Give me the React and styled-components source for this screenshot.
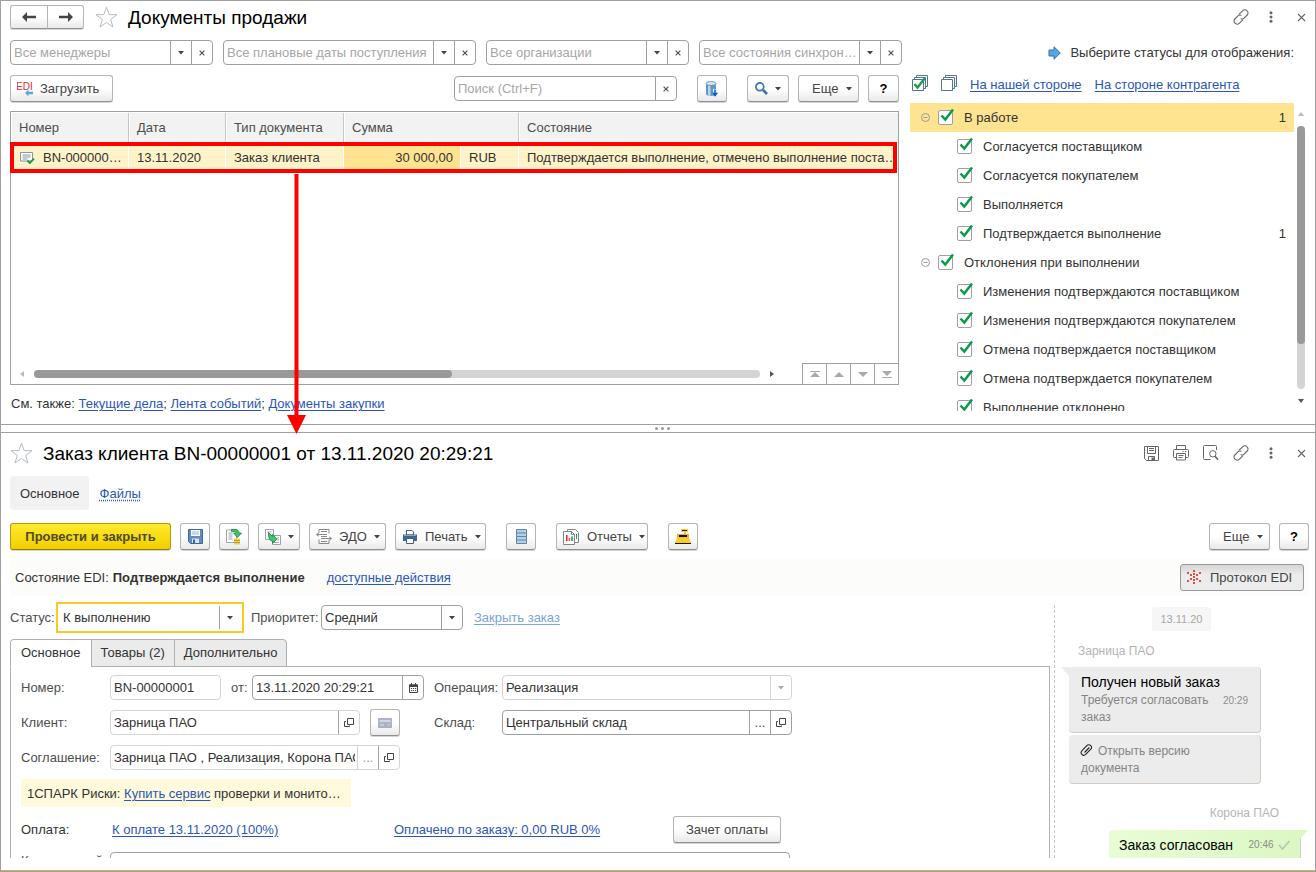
import { useState } from "react";
import styled, { createGlobalStyle, css } from "styled-components";

const GlobalStyle = createGlobalStyle`
  * {
    box-sizing: border-box;
  }

  body {
    margin: 0;
    background: #fff;
    color: #333;
    font-family: "Liberation Sans", Arial, sans-serif;
    font-size: 13px;
    line-height: 17px;
  }

  button, input, select, textarea {
    font: inherit;
    color: inherit;
    margin: 0;
  }

  svg {
    display: block;
    flex: none;
  }
`;

/* ---------- window ---------- */

const Window = styled.div`
  display: flex;
  flex-direction: column;
  height: 100vh;
  min-width: 1120px;
  overflow: hidden;
  border: 1px solid #a0a0a0;
`;

const ListPanel = styled.section`
  flex: none;
  padding: 0 8px 0 9px;
`;

const DocPanel = styled.section`
  display: flex;
  flex-direction: column;
  flex: 1;
  min-height: 0;
  padding: 0 6px 12px 9px;
  border-bottom: 1px solid #c9b458;
`;

const Splitter = styled.div`
  display: flex;
  flex: none;
  align-items: center;
  justify-content: center;
  gap: 3px;
  height: 9px;
  padding-left: 8px;
  border: solid #a0a0a0;
  border-width: 1px 0;
`;

const Dot = styled.i`
  width: 3px;
  height: 3px;
  border-radius: 50%;
  background: #999;
`;

const Header = styled.header`
  display: flex;
  flex: none;
  align-items: center;
  height: ${({ $height }) => $height}px;
`;

const Title = styled.h1`
  flex: 1;
  margin: 0 0 0 10px;
  padding-top: 2px;
  color: #000;
  font-size: 19px;
  font-weight: 400;
  line-height: 24px;
`;

const HeaderTools = styled.div`
  display: flex;
  gap: 2px;
  margin-right: ${({ $pull }) => -$pull}px;
`;

const ToolIcon = styled.button`
  display: flex;
  align-items: center;
  justify-content: center;
  width: 28px;
  height: 24px;
  padding: 0;
  border: 0;
  background: none;
`;

const PlainIcon = styled.button`
  display: flex;
  padding: 0;
  border: 0;
  background: none;
`;

const Link = styled.a`
  color: #2a56b8;
  text-decoration: underline;
  text-underline-offset: 2px;
  ${({ $muted }) => $muted && css`color: #7ba3de;`}
  ${({ $dotted }) => $dotted && css`
    text-decoration-style: dotted;
  `}
`;

/* ---------- buttons ---------- */

const Button = styled.button`
  display: flex;
  flex: none;
  align-items: center;
  justify-content: center;
  gap: 7px;
  width: ${({ $width }) => $width}px;
  height: 27px;
  padding: 0;
  border: 1px solid #b4b4b4;
  border-bottom-color: #8f8f8f;
  border-radius: 3px;
  background: linear-gradient(#fff 50%, #e9e9e9);
  box-shadow: 0 1px 0 #d5d5d5;
  color: #444;
  white-space: nowrap;

  ${({ $primary }) => $primary && css`
    border-color: #b59d00;
    border-bottom-color: #957f00;
    background: linear-gradient(#ffea2e, #f0cf00);
    color: #504a20;
    font-weight: 700;
  `}

  ${({ $pressed }) => $pressed && css`
    border-color: #999;
    background: linear-gradient(#d6d6d6, #ececec 40%);
    box-shadow: none;
  `}

  ${({ $strong }) => $strong && css`
    color: #000;
    font-weight: 700;
  `}

  &:disabled svg {
    opacity: 0.5;
  }
`;

/* icon on the left, text after it, menu caret at the right edge */
const LabelButton = styled(Button)`
  justify-content: flex-start;
  padding: 0 6px;

  svg:last-child:not(:first-child) {
    margin-left: auto;
  }
`;

const MenuButton = styled(Button)`
  justify-content: space-between;
  padding: 0 6px 0 13px;
`;

const NavGroup = styled.div`
  display: flex;
  margin-right: 11px;
`;

const NavButton = styled(Button)`
  height: 24px;

  &:first-child {
    border-radius: 3px 0 0 3px;
  }

  &:last-child {
    margin-left: -1px;
    border-radius: 0 3px 3px 0;
  }
`;

const Toolbar = styled.div`
  display: flex;
  flex: none;
  align-items: center;
  gap: 9px;
`;

const Group = styled.div`
  display: flex;
  gap: 9px;
  margin-left: 11px;
`;

const Spacer = styled.div`
  flex: 1;
`;

/* ---------- fields ---------- */

const FieldBox = styled.div`
  display: flex;
  flex: none;
  width: ${({ $width }) => $width}px;
  height: 25px;
  overflow: hidden;
  border: 1px solid ${({ $light }) => ($light ? "#d4d4d4" : "#a0a0a0")};
  border-radius: 4px;
  background: #fff;

  ${({ $active }) => $active && css`
    height: 31px;
    padding: 2px;
    border: 2px solid #fbc91f;
    border-radius: 0;
  `}
`;

const TextInput = styled.input`
  flex: 1;
  width: 0;
  min-width: 0;
  margin: 0 2px 0 3px;
  padding: 0;
  border: 0;
  outline: 0;
  background: none;

  &::placeholder {
    color: #a6a6a6;
    opacity: 1;
  }
`;

const SelectArea = styled.div`
  display: grid;
  flex: 1;
  grid-template-columns: 1fr 21px;
  min-width: 0;
`;

const NativeSelect = styled.select`
  grid-area: 1 / 1 / 2 / 3;
  min-width: 0;
  padding: 0 21px 0 3px;
  border: 0;
  outline: 0;
  appearance: none;
  background: none;
  color: ${({ $empty }) => ($empty ? "#a6a6a6" : "#333")};
`;

const cell = css`
  display: flex;
  align-items: center;
  justify-content: center;
  width: 21px;
  border-left: 1px solid ${({ $light }) => ($light ? "#d4d4d4" : "#a0a0a0")};
`;

const SelectArrow = styled.span`
  ${cell}
  grid-area: 1 / 2 / 2 / 3;
  pointer-events: none;
`;

const FieldButton = styled.button`
  ${cell}
  flex: none;
  padding: 0;
  border-top: 0;
  border-right: 0;
  border-bottom: 0;
  background: none;
  color: ${({ $light }) => ($light ? "#999" : "#444")};
`;

/* ---------- document list ---------- */

const FilterRow = styled.div`
  display: flex;
  align-items: center;
  gap: 10px;
  margin: 7px 0 10px;
`;

const Hint = styled.div`
  display: flex;
  align-items: center;
  gap: 9px;
  margin: 0 13px 0 auto;
  white-space: nowrap;
`;

const Columns = styled.div`
  display: flex;
  gap: 11px;
`;

const ListColumn = styled.div`
  display: flex;
  flex: 1;
  flex-direction: column;
  min-width: 0;
`;

const TableBox = styled.div`
  position: relative;
  display: flex;
  flex: 1;
  flex-direction: column;
  justify-content: space-between;
  margin-top: 9px;
  border: 1px solid #a0a0a0;
`;

const Table = styled.table`
  width: 100%;
  table-layout: fixed;
  border-collapse: separate;
  border-spacing: 0;
`;

const Col = styled.col`
  width: ${({ $width }) => ($width ? `${$width}px` : "auto")};
`;

const Th = styled.th`
  height: 31px;
  padding: 0 0 0 7px;
  border: solid #fff;
  border-width: 1px 0 1px 1px;
  background: #f2f2f2;
  box-shadow: ${({ $last }) => ($last ? "none" : "inset -1px 0 0 #c8c8c8")};
  color: #4d4d4d;
  font-weight: 400;
  text-align: left;
`;

const Td = styled.td`
  height: 29px;
  padding: 0 ${({ $current }) => ($current ? 7 : 0)}px 0 8px;
  border-right: 1px solid #fff;
  overflow: hidden;
  background: ${({ $current }) => ($current ? "#fee391" : "#fdf2c8")};
  text-align: ${({ $current }) => ($current ? "right" : "left")};
  white-space: nowrap;
`;

const DocNumber = styled.span`
  display: flex;
  align-items: center;
  gap: 8px;
  padding-left: 1px;
`;

const RowMark = styled.div`
  position: absolute;
  top: 30px;
  right: 1px;
  left: -1px;
  height: 31px;
  border: 4px solid #f00;
  pointer-events: none;
`;

const MarkArrow = styled.svg`
  position: absolute;
  z-index: 2;
  top: 62px;
  left: 276px;
  pointer-events: none;
`;

const TableFooter = styled.div`
  display: flex;
  align-items: center;
  height: 21px;
  padding-left: 9px;
`;

const HTrack = styled.div`
  flex: 1;
  height: 8px;
  margin: 0 10px;
  border-radius: 4px;
  background: #d4d4d4;
`;

const HThumb = styled.div`
  width: 418px;
  height: 8px;
  border-radius: 4px;
  background: #999;
`;

const Pager = styled.div`
  display: flex;
  align-self: stretch;
  margin-left: 28px;
  border-top: 1px solid #a0a0a0;
`;

const PagerButton = styled.button`
  display: flex;
  align-items: center;
  justify-content: center;
  width: 24px;
  padding: 0;
  border: 0;
  border-left: 1px solid #a0a0a0;
  background: #fff;
`;

const SeeAlso = styled.nav`
  display: flex;
  align-items: center;
  height: 39px;
  padding: 0 0 2px 1px;
  white-space: pre;
`;

/* ---------- statuses ---------- */

const StatusColumn = styled.aside`
  flex: none;
  width: 397px;
  padding: 0 2px 13px 0;
`;

const StatusTools = styled.div`
  display: flex;
  align-items: flex-start;
  gap: 13px;
  height: 28px;
  padding-left: 2px;

  a {
    margin-top: 1px;
  }
`;

const StatusBody = styled.div`
  display: flex;
  gap: 3px;
  height: 308px;
`;

const StatusList = styled.ul`
  flex: 1;
  margin: 0;
  padding: 0;
  overflow: hidden;
  list-style: none;
`;

const StatusRow = styled.li`
  display: flex;
  align-items: center;
  height: 29px;
  padding: 0 8px 0 ${({ $level }) => ($level ? 47 : 11)}px;
  background: ${({ $selected }) => ($selected ? "#fee391" : "none")};
`;

const Toggle = styled.button`
  display: flex;
  margin-right: 8px;
  padding: 0;
  border: 0;
  background: none;
`;

const CheckLabel = styled.label`
  position: relative;
  display: flex;
  flex: 1;
  align-items: center;
  gap: 11px;
`;

const CheckBox = styled.input`
  width: 15px;
  height: 15px;
  border: 1px solid #a0a0a0;
  border-radius: 2px;
  appearance: none;
  background: #fff;

  & + svg {
    position: absolute;
    top: -1px;
    left: 2px;
    visibility: hidden;
    pointer-events: none;
  }

  &:checked + svg {
    visibility: visible;
  }
`;

const VScroll = styled.div`
  display: flex;
  flex-direction: column;
  align-items: center;
  width: 8px;
  padding: 9px 0 8px;
`;

const VTrack = styled.div`
  flex: 1;
  width: 8px;
  margin: 10px 0;
  border-radius: 4px;
  background: #d4d4d4;
`;

const VThumb = styled.div`
  height: 218px;
  border-radius: 4px;
  background: #999;
`;

/* ---------- order form ---------- */

const SectionNav = styled.nav`
  display: flex;
  flex: none;
  align-items: center;
  gap: 11px;
  margin: 3px 0 13px;
`;

const SectionCurrent = styled.span`
  padding: 9px 9px 8px 10px;
  border-radius: 4px;
  background: #f2f2f2;
`;

const StateBar = styled.div`
  display: flex;
  flex: none;
  align-items: center;
  height: 37px;
  margin-top: 9px;
  padding: 0 5px;
  background: #fcfcfa;

  b {
    margin: 0 22px 0 4px;
  }
`;

const Workspace = styled.div`
  display: flex;
  flex: 1;
  min-height: 0;
  overflow: hidden;
`;

const FormColumn = styled.div`
  flex: 1;
  min-width: 0;
  padding: 6px 4px 0 0;
`;

const StatusLine = styled.div`
  display: flex;
  align-items: center;
  height: 31px;
`;

const Priority = styled.div`
  display: flex;
  align-items: center;
  margin: 0 11px 0 7px;
`;

const Label = styled.label`
  flex: none;
  width: ${({ $width }) => ($width ? `${$width}px` : "auto")};
  color: #4d4d4d;
  white-space: nowrap;
`;

const Tabs = styled.div`
  display: flex;
  margin-top: 6px;
`;

const Tab = styled.button`
  height: 28px;
  margin: 0 0 -1px -1px;
  padding: 0 9px 1px;
  border: 1px solid #b0b0b0;
  background: ${({ $active }) => ($active ? "#fff" : "#ebebeb")};
  border-bottom-color: ${({ $active }) => ($active ? "#fff" : "#b0b0b0")};

  &:first-child {
    margin-left: 0;
    padding: 0 10px 1px;
    border-radius: 4px 0 0 0;
  }

  &:last-child {
    border-radius: 0 4px 0 0;
  }
`;

const TabPage = styled.div`
  display: flex;
  flex-direction: column;
  gap: 9px;
  height: 400px;
  padding: 8px 10px;
  border: 1px solid #b0b0b0;
`;

const FormGrid = styled.div`
  display: grid;
  grid-template-columns: 89px 324px 68px 290px;
  align-items: center;
  row-gap: 10px;
`;

const Cell = styled.div`
  display: flex;
  align-items: center;
  gap: 10px;
  height: 25px;
`;

const Notice = styled.div`
  width: 330px;
  padding: 6px 6px 5px;
  background: #fffadb;
  white-space: nowrap;
`;

const PayRow = styled.div`
  display: flex;
  align-items: center;
`;

const CommentRow = styled.div`
  display: flex;
`;

const PayCell = styled.div`
  width: ${({ $width }) => $width}px;
`;

/* ---------- protocol ---------- */

const Chat = styled.aside`
  display: flex;
  flex: none;
  flex-direction: column;
  width: 255px;
  margin-top: 9px;
  padding: 2px 0 0 14px;
  border-left: 1px dashed #c8c8c8;
`;

const DateChip = styled.time`
  align-self: center;
  margin-right: 15px;
  padding: 4px 8px 3px;
  border-radius: 3px;
  background: #f6f6f6;
  color: #a8a8a8;
  font-size: 11px;
`;

const Sender = styled.div`
  margin: ${({ $mine }) => ($mine ? "19px 30px 8px 0" : "12px 0 7px 9px")};
  color: #b4b4b4;
  font-size: 12px;
  text-align: ${({ $mine }) => ($mine ? "right" : "left")};
`;

const Bubble = styled.div`
  position: relative;
  width: 192px;
  margin-bottom: 2px;
  padding: 6px 12px;
  border: solid #d3cbc3;
  border-width: 0 1px 1px 0;
  border-radius: 4px;
  background: #ececec;
  color: #858585;
  font-size: 12px;

  ${({ $mine }) => $mine && css`
    align-self: flex-end;
    margin-right: 8px;
    padding: 6px 10px;
    background: linear-gradient(90deg, #e8fdd6, #dbf7c2);
  `}
`;

const Tail = styled.svg`
  position: absolute;
  top: 0;
  ${({ $side }) => $side}: -8px;
`;

const BubbleTitle = styled.div`
  color: #000;
  font-size: 14px;
  line-height: 19px;
`;

const BubbleText = styled.div`
  display: flex;
  justify-content: space-between;
  align-items: flex-start;
`;

const Time = styled.time`
  color: #8c8c8c;
  font-size: 10px;
`;

const Attachment = styled.button`
  display: block;
  padding: 2px 0 0;
  border: 0;
  background: none;
  color: inherit;
  font-size: 12px;
  text-align: left;

  svg {
    display: inline-block;
    margin: 0 5px -1px -1px;
  }
`;

/* ---------- icons ---------- */

const Caret = ({ color = "#444" }) => (
  <svg width="6" height="4"><path d="M0 0h6L3 3.5z" fill={color} /></svg>
);

const Cross = () => (
  <svg width="6" height="6" viewBox="0 0 6 6">
    <path d="M.6.6l4.8 4.8M5.4.6L.6 5.4" stroke="#555" strokeWidth="1.2" />
  </svg>
);

const CloseIcon = () => (
  <svg width="9" height="9" viewBox="0 0 9 9">
    <path d="M1 1l7 7M8 1L1 8" stroke="#666" strokeWidth="1.1" />
  </svg>
);

const Star = () => (
  <svg width="23" height="22" viewBox="0 0 23 22" fill="none" stroke="#b5bcc4">
    <path d="M11.5 1.2l2.6 7.4 7.9.1-6.3 4.8 2.3 7.5-6.5-4.5L5 21l2.3-7.5L1 8.7l7.9-.1z" />
  </svg>
);

const Arrow = ({ back }) => (
  <svg width="14" height="10" viewBox="0 0 14 10">
    <path d={back ? "M0 5l5-5v3.8h9v2.4H5V10z" : "M14 5L9 0v3.8H0v2.4h9V10z"} fill="#444" />
  </svg>
);

const LinkIcon = () => (
  <svg width="16" height="16" viewBox="0 0 16 16" fill="none" stroke="#666" strokeWidth="1.1" strokeLinecap="round">
    <path d="M6.2 5.2l3.6-3.6a2.900 2.900 0 014.200.2 2.900 2.900 0 01.2 4.200L11 9.200a2.800 2.800 0 01-3 .5" />
    <path d="M9.8 10.8l-3.600 3.600a2.900 2.900 0 01-4.200-.2 2.900 2.900 0 01-.2-4.200L5 6.800a2.800 2.800 0 013-.5" />
  </svg>
);

const MoreIcon = () => (
  <svg width="4" height="12" fill="#666">
    <circle cx="2" cy="1.7" r="1.5" />
    <circle cx="2" cy="6" r="1.5" />
    <circle cx="2" cy="10.3" r="1.5" />
  </svg>
);

const SaveIcon = () => (
  <svg width="15" height="15" viewBox="0 0 15 15" fill="none" stroke="#666">
    <path d="M.5.5h14v14h-12l-2-2zM3.500.5v7h8v-7M5 2.500h5M5 4.500h5M4.500 14.500v-4h6v4" />
    <path d="M7.500 11.500h2.500v3H7.500z" fill="#666" stroke="none" />
  </svg>
);

const PrintIcon = () => (
  <svg width="16" height="16" viewBox="0 0 16 16" fill="none" stroke="#666">
    <path d="M3.500 4V.5h9V4M3.500 12.500h-2a1 1 0 01-1-1v-6a1 1 0 011-1h13a1 1 0 011 1v6a1 1 0 01-1 1h-2M3.500 8.500h9v6.500h-9zM5.500 10.500h5M5.500 12.500h4M12 6.500h1.500M9.500 6.500h1" />
  </svg>
);

const PreviewIcon = () => (
  <svg width="16" height="16" viewBox="0 0 16 16" fill="none" stroke="#666">
    <path d="M13.500 5V1.500a1 1 0 00-1-1h-11a1 1 0 00-1 1v12a1 1 0 001 1h6" />
    <circle cx="9.800" cy="8.800" r="3.200" />
    <path d="M12 11.200l3 3.600" strokeWidth="1.600" />
  </svg>
);

const EdiIcon = () => (
  <svg width="16" height="16" viewBox="0 0 16 16">
    <text x="-1" y="9" fill="#e8281e" fontSize="10" fontFamily="Liberation Sans, sans-serif">EDI</text>
    <path d="M8 12l3.500-3.500v2.200H16v2.600h-4.500v2.200z" fill="#5aa5ea" />
  </svg>
);

const DatabaseIcon = () => (
  <svg width="14" height="16" viewBox="0 0 14 16">
    <path d="M1 2.500v10.500c0 1.300 2.200 2 5 2s5-.7 5-2V2.500z" fill="#5f98c4" />
    <path d="M3 3.500v10.900c.8.300 1.500.4 2.500.5V4z" fill="#b5d6ea" />
    <ellipse cx="6" cy="2.500" rx="5" ry="1.900" fill="#dcecf6" stroke="#4a7fa8" strokeWidth=".8" />
    <path d="M8 8h4v4h1l-3 3.700L7 12h1z" fill="#eef6fb" />
    <path d="M10 8.500V14M7.800 11.800l2.200 2.600 2.200-2.600" stroke="#0b5fb0" strokeWidth="1.600" fill="none" />
  </svg>
);

const SearchIcon = () => (
  <svg width="13" height="13" viewBox="0 0 13 13" fill="none" stroke="#3b74ae">
    <circle cx="4.800" cy="4.800" r="3.900" strokeWidth="1.700" />
    <path d="M8 8l4 4" strokeWidth="2.600" />
  </svg>
);

const DocIcon = () => (
  <svg width="15" height="12" viewBox="0 0 15 12">
    <path d="M.5.5h12v8.500H.5z" fill="#fff" stroke="#8a93a0" />
    <path d="M2.500 3h8M2.500 5h8M2.500 7h5" stroke="#8a93a0" />
    <path d="M7.500 8.500l2.300 2.400L14 6.600" stroke="#1d9c46" strokeWidth="2" fill="none" />
  </svg>
);

const BlueArrow = () => (
  <svg width="13" height="14" viewBox="0 0 13 14">
    <path d="M1 4h5V.8L12.300 7 6 13.200V10H1z" fill="#5ba4e6" stroke="#2f6fab" />
  </svg>
);

const StackIcon = ({ checked }) => (
  <svg width="16" height="16" viewBox="0 0 16 16" fill="#fff" stroke="#4f7690">
    <path d="M4.500.5h11v11h-11z" />
    <path d="M2.500 2.500h11v11h-11z" />
    <path d="M.5 4.500h11v11H.5z" />
    {checked && <path d="M2.500 9l3 3.500 7.500-9.500" stroke="#1f9d48" strokeWidth="2.400" fill="none" />}
  </svg>
);

const MinusIcon = () => (
  <svg width="9" height="9" viewBox="0 0 9 9" fill="none" stroke="#999">
    <circle cx="4.500" cy="4.500" r="4" />
    <path d="M2.500 4.500h4" />
  </svg>
);

const CheckIcon = () => (
  <svg width="14" height="15" viewBox="0 0 14 15">
    <path d="M1.500 7.500l3.800 4L13 1.500" stroke="#0b9a4a" strokeWidth="2.500" fill="none" />
  </svg>
);

const Triangle = ({ dir, color = "#555" }) => {
  const paths = {
    left: "M4 0v6L0 3z",
    right: "M0 0v6l4-3z",
    up: "M0 4h6L3 0z",
    down: "M0 0h6L3 4z",
  };
  const flat = dir === "up" || dir === "down";
  return (
    <svg width={flat ? 6 : 4} height={flat ? 4 : 6}><path d={paths[dir]} fill={color} /></svg>
  );
};

const PagerIcon = ({ d }) => (
  <svg width="10" height="7" viewBox="0 0 10 7"><path d={d} fill="#aaa" /></svg>
);

const FloppyIcon = () => (
  <svg width="15" height="15" viewBox="0 0 15 15">
    <path d="M.5.5h14v14h-12l-2-2z" fill="#5d8fc4" stroke="#3d6796" />
    <path d="M3 1h9v6H3z" fill="#fff" />
    <path d="M4 3h7M4 5h7" stroke="#9bb0c4" />
    <path d="M4 9.500h7V14H4z" fill="#dbe4ec" />
    <path d="M5 10.500h2V14H5z" fill="#3d6796" />
  </svg>
);

const PostIcon = () => (
  <svg width="16" height="16" viewBox="0 0 16 16">
    <path d="M.5 1h10v12.500H.5z" fill="#fff" stroke="#9aa5ae" />
    <path d="M2.500 4h4M2.500 6h4M2.500 8h4M2.500 10h4" stroke="#9aa5ae" />
    <path d="M5.500.5H9c2.500 0 4 1 4 3.500h2.500L11.500 8.500 7.500 4H10c0-1.200-.4-1.500-1.200-1.500H5.500z" fill="#3cc96d" stroke="#17853e" strokeWidth=".8" />
    <path d="M8 9.500h6v6H8z" fill="#f5cf4e" />
    <path d="M8 11.500h6M8 13.500h6" stroke="#c8952a" />
  </svg>
);

const BasedOnIcon = () => (
  <svg width="16" height="16" viewBox="0 0 16 16">
    <path d="M.5.5h8v10h-8z" fill="#fff" stroke="#9aa5ae" />
    <path d="M7.500 6.500h8v9h-8z" fill="#fff" stroke="#9aa5ae" />
    <path d="M2.500 3h4M12 9h2M12 11h2M9 13.500h5" stroke="#9aa5ae" />
    <path d="M3.500 3.500l4 4V5.500l4.500 4.500-4.500 4.500v-2.500c-2.500 0-4-2-4-8.500z" fill="#3cc96d" stroke="#17853e" strokeWidth=".8" />
  </svg>
);

const EdoIcon = () => (
  <svg width="16" height="15" viewBox="0 0 16 15" fill="none" stroke="#888">
    <path d="M3 4V.5h10v4M3 10.500v4h10V11M5 2.500h6M1 5.500h10M5 7.500h6M5 9.500h10M5 12.500h6" />
    <path d="M0 5.500l2.500-2.200v4.400zM16 9.500l-2.500-2.200v4.400z" fill="#888" stroke="none" />
  </svg>
);

const PrinterIcon = () => (
  <svg width="16" height="14" viewBox="0 0 16 14">
    <path d="M4.500.5h5.500l1.500 1.500v3h-7z" fill="#fff" stroke="#46617c" />
    <path d="M1 4.500h14v6.500H1z" fill="#3f6791" />
    <path d="M2 5.500h12" stroke="#86a7c8" />
    <path d="M4.500 8.500h7v5h-7z" fill="#fff" stroke="#46617c" />
  </svg>
);

const RegisterIcon = () => (
  <svg width="11" height="15" viewBox="0 0 11 15">
    <path d="M.5.5h10v14H.5z" fill="#b4d0e4" stroke="#5d87a6" />
    <path d="M1 4h9M1 7.500h9M1 11h9" stroke="#5d87a6" strokeWidth="1.200" />
  </svg>
);

const ReportIcon = () => (
  <svg width="17" height="16" viewBox="0 0 17 16">
    <path d="M4.500.5h8l3 3v10h-11z" fill="#fff" stroke="#7d8790" />
    <path d="M.5 2.500h8l3 3v10H.5z" fill="#fff" stroke="#7d8790" />
    <path d="M8.500 2.500v3h3" fill="none" stroke="#7d8790" />
    <path d="M3 6h1.600v6H3z" fill="#d9342b" />
    <path d="M5.600 9h1.600v3H5.600z" fill="#e0574f" />
    <path d="M8.200 7.500h1.600V12H8.200z" fill="#279b49" />
    <path d="M13.500 5v5" stroke="#279b49" />
  </svg>
);

const CashIcon = () => (
  <svg width="16" height="15" viewBox="0 0 16 15">
    <path d="M6 0h7v3h-2v2H9V3H6z" fill="#fbc91f" />
    <path d="M7 1h5v1H7z" fill="#222" />
    <path d="M2 5h12v4H2z" fill="#e9a856" />
    <path d="M2 8.500h12l2 5.500H0z" fill="#fccd1c" />
    <path d="M4 6h8v2H4zM0 14h16v1H0z" fill="#111" />
  </svg>
);

const ProtocolIcon = () => (
  <svg width="16" height="15" viewBox="0 0 16 15" fill="#d9504a">
    <path d="M6 0h2v2H6zM6 3h2v2H6zM6 6h2v2H6zM6 9h2v2H6zM6 12h2v2H6zM0 2h2v2H0zM3 4h2v2H3zM3 8h2v2H3zM0 10h2v2H0zM12 2h2v2h-2zM9 4h2v2H9zM9 8h2v2H9zM12 10h2v2h-2z" />
  </svg>
);

const CalendarIcon = () => (
  <svg width="9" height="10" viewBox="0 0 9 10">
    <path d="M.5 2h8v7.500h-8z" fill="none" stroke="#444" />
    <path d="M0 1.500h9v2.500H0zM2 0h1v2H2zM6 0h1v2H6z" fill="#444" />
    <path d="M2 5.500h5.200M2 7.500h5.200" stroke="#444" strokeDasharray="1.200 .8" />
  </svg>
);

const OpenIcon = () => (
  <svg width="10" height="10" viewBox="0 0 10 10" fill="none" stroke="#444">
    <path d="M3.500.5h6v6h-6zM2 3.500H.5v5h5V7.500" />
  </svg>
);

const CardIcon = () => (
  <svg width="14" height="10" viewBox="0 0 14 10">
    <path d="M0 0h14v10H0z" fill="#5d6c95" />
    <path d="M1.500 3h11" stroke="#b9c8d4" strokeWidth="1.500" />
    <path d="M2 7h4" stroke="#c5cfdd" />
    <path d="M9 6h3v2H9z" fill="#d06a6a" />
  </svg>
);

const ClipIcon = () => (
  <svg width="13" height="12" viewBox="0 0 13 12" fill="none" stroke="#222" strokeWidth="1.100">
    <path d="M4.500 8.500l4.800-5M1.800 6.800l5-5.200a2.800 2.800 0 014 0 2.500 2.500 0 010 3.600L5.500 10.500a2.200 2.200 0 01-3.700-.3 2.300 2.300 0 010-3.400z" />
  </svg>
);

/* ---------- parts ---------- */

const Select = ({ id, label, value, width, light, active, empty, onClear }) => (
  <FieldBox $width={width} $light={light} $active={active}>
    <SelectArea>
      <NativeSelect id={id} aria-label={label} $empty={empty} defaultValue={value}>
        <option>{value}</option>
      </NativeSelect>
      <SelectArrow $light={light}><Caret color={light ? "#aaa" : "#444"} /></SelectArrow>
    </SelectArea>
    {onClear && (
      <FieldButton type="button" aria-label="Очистить" onClick={onClear}><Cross /></FieldButton>
    )}
  </FieldBox>
);

const filters = [
  { name: "Все менеджеры", width: 203 },
  { name: "Все плановые даты поступления", width: 253 },
  { name: "Все организации", width: 203 },
  { name: "Все состояния синхрон…", width: 203 },
];

const statuses = [
  { name: "В работе", level: 0, count: 1, selected: true },
  { name: "Согласуется поставщиком", level: 1 },
  { name: "Согласуется покупателем", level: 1 },
  { name: "Выполняется", level: 1 },
  { name: "Подтверждается выполнение", level: 1, count: 1 },
  { name: "Отклонения при выполнении", level: 0 },
  { name: "Изменения подтверждаются поставщиком", level: 1 },
  { name: "Изменения подтверждаются покупателем", level: 1 },
  { name: "Отмена подтверждается поставщиком", level: 1 },
  { name: "Отмена подтверждается покупателем", level: 1 },
  { name: "Выполнение отклонено", level: 1 },
];

const pagerIcons = [
  { name: "В начало", d: "M0 0h10v1H0zM5 1l5 5H0z" },
  { name: "Вверх", d: "M5 1l5 5H0z" },
  { name: "Вниз", d: "M0 1h10L5 6z" },
  { name: "В конец", d: "M0 0h10L5 5zM0 6h10v1H0z" },
];

const formTabs = ["Основное", "Товары (2)", "Дополнительно"];

const DocumentsTable = () => (
  <TableBox>
    <Table>
      <colgroup>
        <Col $width={118} />
        <Col $width={97} />
        <Col $width={118} />
        <Col $width={117} />
        <Col $width={58} />
        <Col />
      </colgroup>
      <thead>
        <tr>
          <Th>Номер</Th>
          <Th>Дата</Th>
          <Th>Тип документа</Th>
          <Th colSpan={2}>Сумма</Th>
          <Th $last>Состояние</Th>
        </tr>
      </thead>
      <tbody>
        <tr>
          <Td><DocNumber><DocIcon />BN-000000…</DocNumber></Td>
          <Td>13.11.2020</Td>
          <Td>Заказ клиента</Td>
          <Td $current>30 000,00</Td>
          <Td>RUB</Td>
          <Td>Подтверждается выполнение, отмечено выполнение поста…</Td>
        </tr>
      </tbody>
    </Table>
    <TableFooter>
      <Triangle dir="left" color="#bbb" />
      <HTrack><HThumb /></HTrack>
      <Triangle dir="right" />
      <Pager>
        {pagerIcons.map((icon) => (
          <PagerButton key={icon.name} aria-label={icon.name}><PagerIcon d={icon.d} /></PagerButton>
        ))}
      </Pager>
    </TableFooter>
    <RowMark />
    <MarkArrow width="20" height="260" viewBox="0 0 20 260">
      <path d="M7.500 0h4v242h-4zM0 241h19l-9.500 19z" fill="#f00" />
    </MarkArrow>
  </TableBox>
);

const Statuses = () => {
  const [off, setOff] = useState([]);

  const toggle = (name) => {
    setOff(off.includes(name) ? off.filter((n) => n !== name) : [...off, name]);
  };

  return (
    <StatusColumn>
      <StatusTools>
        <PlainIcon aria-label="Выбрать все" onClick={() => setOff([])}><StackIcon checked /></PlainIcon>
        <PlainIcon aria-label="Снять все" onClick={() => setOff(statuses.map((s) => s.name))}><StackIcon /></PlainIcon>
        <Link href="#our">На нашей стороне</Link>
        <Link href="#partner">На стороне контрагента</Link>
      </StatusTools>
      <StatusBody>
        <StatusList>
          {statuses.map((s) => (
            <StatusRow key={s.name} $level={s.level} $selected={s.selected}>
              {s.level === 0 && <Toggle aria-label="Свернуть"><MinusIcon /></Toggle>}
              <CheckLabel>
                <CheckBox type="checkbox" checked={!off.includes(s.name)} onChange={() => toggle(s.name)} />
                <CheckIcon />
                {s.name}
              </CheckLabel>
              {s.count}
            </StatusRow>
          ))}
        </StatusList>
        <VScroll>
          <Triangle dir="up" color="#bbb" />
          <VTrack><VThumb /></VTrack>
          <Triangle dir="down" />
        </VScroll>
      </StatusBody>
    </StatusColumn>
  );
};

const OrderForm = () => {
  const [tab, setTab] = useState(formTabs[0]);

  return (
    <FormColumn>
      <StatusLine>
        <Label htmlFor="status" $width={46}>Статус:</Label>
        <Select id="status" value="К выполнению" width={188} active />
        <Priority>
          <Label htmlFor="priority" $width={70}>Приоритет:</Label>
          <Select id="priority" value="Средний" width={142} />
        </Priority>
        <Link href="#close" $muted>Закрыть заказ</Link>
      </StatusLine>
      <Tabs role="tablist">
        {formTabs.map((name) => (
          <Tab key={name} role="tab" $active={name === tab} onClick={() => setTab(name)}>{name}</Tab>
        ))}
      </Tabs>
      <TabPage>
        <FormGrid>
          <Label htmlFor="number">Номер:</Label>
          <Cell>
            <FieldBox $width={111} $light><TextInput id="number" defaultValue="BN-00000001" /></FieldBox>
            <Label htmlFor="date" $width={11}>от:</Label>
            <FieldBox $width={172}>
              <TextInput id="date" defaultValue="13.11.2020 20:29:21" />
              <FieldButton aria-label="Календарь"><CalendarIcon /></FieldButton>
            </FieldBox>
          </Cell>
          <Label htmlFor="operation">Операция:</Label>
          <Select id="operation" value="Реализация" width={290} light />

          <Label htmlFor="client">Клиент:</Label>
          <Cell>
            <FieldBox $width={250} $light>
              <TextInput id="client" defaultValue="Зарница ПАО" />
              <FieldButton aria-label="Открыть"><OpenIcon /></FieldButton>
            </FieldBox>
            <Button $width={30} disabled aria-label="Карта"><CardIcon /></Button>
          </Cell>
          <Label htmlFor="store">Склад:</Label>
          <FieldBox $width={290}>
            <TextInput id="store" defaultValue="Центральный склад" />
            <FieldButton aria-label="Выбрать">...</FieldButton>
            <FieldButton aria-label="Открыть"><OpenIcon /></FieldButton>
          </FieldBox>

          <Label htmlFor="contract">Соглашение:</Label>
          <FieldBox $width={290} $light>
            <TextInput id="contract" defaultValue="Зарница ПАО , Реализация, Корона ПАО" />
            <FieldButton $light aria-label="Выбрать">...</FieldButton>
            <FieldButton aria-label="Открыть"><OpenIcon /></FieldButton>
          </FieldBox>
        </FormGrid>
        <Notice>
          1СПАРК Риски: <Link href="#spark">Купить сервис</Link> проверки и монито…
        </Notice>
        <PayRow>
          <PayCell $width={91}>Оплата:</PayCell>
          <PayCell $width={282}><Link href="#pay">К оплате 13.11.2020 (100%)</Link></PayCell>
          <PayCell $width={279}><Link href="#paid">Оплачено по заказу: 0,00 RUB 0%</Link></PayCell>
          <Button $width={108}>Зачет оплаты</Button>
        </PayRow>
        <CommentRow>
          <Label htmlFor="comment" $width={89}>Комментарий:</Label>
          <FieldBox $width={680}><TextInput id="comment" /></FieldBox>
        </CommentRow>
      </TabPage>
    </FormColumn>
  );
};

const Protocol = () => (
  <Chat>
    <DateChip>13.11.20</DateChip>
    <Sender>Зарница ПАО</Sender>
    <Bubble>
      <Tail $side="left" width="9" height="10"><path d="M0 0h9v10z" fill="#ececec" /></Tail>
      <BubbleTitle>Получен новый заказ</BubbleTitle>
      <BubbleText>
        <span>Требуется согласовать<br />заказ</span>
        <Time>20:29</Time>
      </BubbleText>
    </Bubble>
    <Bubble>
      <Attachment><ClipIcon />Открыть версию<br />документа</Attachment>
    </Bubble>
    <Sender $mine>Корона ПАО</Sender>
    <Bubble $mine>
      <Tail $side="right" width="9" height="10"><path d="M0 0h9L0 10z" fill="#dbf7c2" /></Tail>
      <BubbleText>
        <BubbleTitle>Заказ согласован</BubbleTitle>
        <Group>
          <Time>20:46</Time>
        </Group>
        <svg width="12" height="17" viewBox="0 0 12 17" fill="none" stroke="#b9c4b0" strokeWidth="1.500">
          <path d="M1 9l3.500 4L11.500 5" />
        </svg>
      </BubbleText>
    </Bubble>
  </Chat>
);

const App = () => {
  const [search, setSearch] = useState("");

  return (
    <>
      <GlobalStyle />
      <Window>
        <ListPanel>
          <Header $height={32}>
            <NavGroup>
              <NavButton $width={38} aria-label="Назад"><Arrow back /></NavButton>
              <NavButton $width={37} aria-label="Вперед"><Arrow /></NavButton>
            </NavGroup>
            <PlainIcon aria-label="В избранное"><Star /></PlainIcon>
            <Title>Документы продажи</Title>
            <HeaderTools $pull={8}>
              <ToolIcon aria-label="Ссылка"><LinkIcon /></ToolIcon>
              <ToolIcon aria-label="Меню"><MoreIcon /></ToolIcon>
              <ToolIcon aria-label="Закрыть"><CloseIcon /></ToolIcon>
            </HeaderTools>
          </Header>
          <FilterRow>
            {filters.map((f) => (
              <Select key={f.name} label={f.name} value={f.name} width={f.width} empty onClear={() => {}} />
            ))}
            <Hint><BlueArrow />Выберите статусы для отображения:</Hint>
          </FilterRow>
          <Columns>
            <ListColumn>
              <Toolbar>
                <LabelButton $width={103}><EdiIcon />Загрузить</LabelButton>
                <Spacer />
                <FieldBox $width={223}>
                  <TextInput
                    aria-label="Поиск"
                    placeholder="Поиск (Ctrl+F)"
                    value={search}
                    onChange={(e) => setSearch(e.target.value)}
                  />
                  <FieldButton aria-label="Очистить" onClick={() => setSearch("")}><Cross /></FieldButton>
                </FieldBox>
                <Group><Button $width={30} aria-label="Получить данные"><DatabaseIcon /></Button></Group>
                <Group>
                  <Button $width={42} aria-label="Найти"><SearchIcon /><Caret /></Button>
                  <MenuButton $width={61}>Еще<Caret /></MenuButton>
                  <Button $width={31} $strong>?</Button>
                </Group>
              </Toolbar>
              <DocumentsTable />
              <SeeAlso>
                См. также: <Link href="#todo">Текущие дела</Link>; <Link href="#feed">Лента событий</Link>; <Link href="#purchases">Документы закупки</Link>
              </SeeAlso>
            </ListColumn>
            <Statuses />
          </Columns>
        </ListPanel>

        <Splitter><Dot /><Dot /><Dot /></Splitter>

        <DocPanel>
          <Header $height={40}>
            <PlainIcon aria-label="В избранное"><Star /></PlainIcon>
            <Title>Заказ клиента BN-00000001 от 13.11.2020 20:29:21</Title>
            <HeaderTools $pull={6}>
              <ToolIcon aria-label="Сохранить"><SaveIcon /></ToolIcon>
              <ToolIcon aria-label="Печать"><PrintIcon /></ToolIcon>
              <ToolIcon aria-label="Просмотр"><PreviewIcon /></ToolIcon>
              <ToolIcon aria-label="Ссылка"><LinkIcon /></ToolIcon>
              <ToolIcon aria-label="Меню"><MoreIcon /></ToolIcon>
              <ToolIcon aria-label="Закрыть"><CloseIcon /></ToolIcon>
            </HeaderTools>
          </Header>
          <SectionNav>
            <SectionCurrent>Основное</SectionCurrent>
            <Link href="#files" $dotted>Файлы</Link>
          </SectionNav>
          <Toolbar>
            <Button $width={161} $primary>Провести и закрыть</Button>
            <Button $width={30} aria-label="Записать"><FloppyIcon /></Button>
            <Button $width={30} aria-label="Провести"><PostIcon /></Button>
            <Button $width={42} aria-label="Создать на основании"><BasedOnIcon /><Caret /></Button>
            <LabelButton $width={77}><EdoIcon />ЭДО<Caret /></LabelButton>
            <LabelButton $width={91}><PrinterIcon />Печать<Caret /></LabelButton>
            <Group><Button $width={30} aria-label="Движения"><RegisterIcon /></Button></Group>
            <Group><LabelButton $width={92}><ReportIcon />Отчеты<Caret /></LabelButton></Group>
            <Group><Button $width={30} aria-label="Касса"><CashIcon /></Button></Group>
            <Spacer />
            <MenuButton $width={61}>Еще<Caret /></MenuButton>
            <Button $width={30} $strong>?</Button>
          </Toolbar>
          <StateBar>
            Состояние EDI:<b>Подтверждается выполнение</b>
            <Link href="#actions">доступные действия</Link>
            <Spacer />
            <LabelButton $width={124} $pressed><ProtocolIcon />Протокол EDI</LabelButton>
          </StateBar>
          <Workspace>
            <OrderForm />
            <Protocol />
          </Workspace>
        </DocPanel>
      </Window>
    </>
  );
};

export default App;
